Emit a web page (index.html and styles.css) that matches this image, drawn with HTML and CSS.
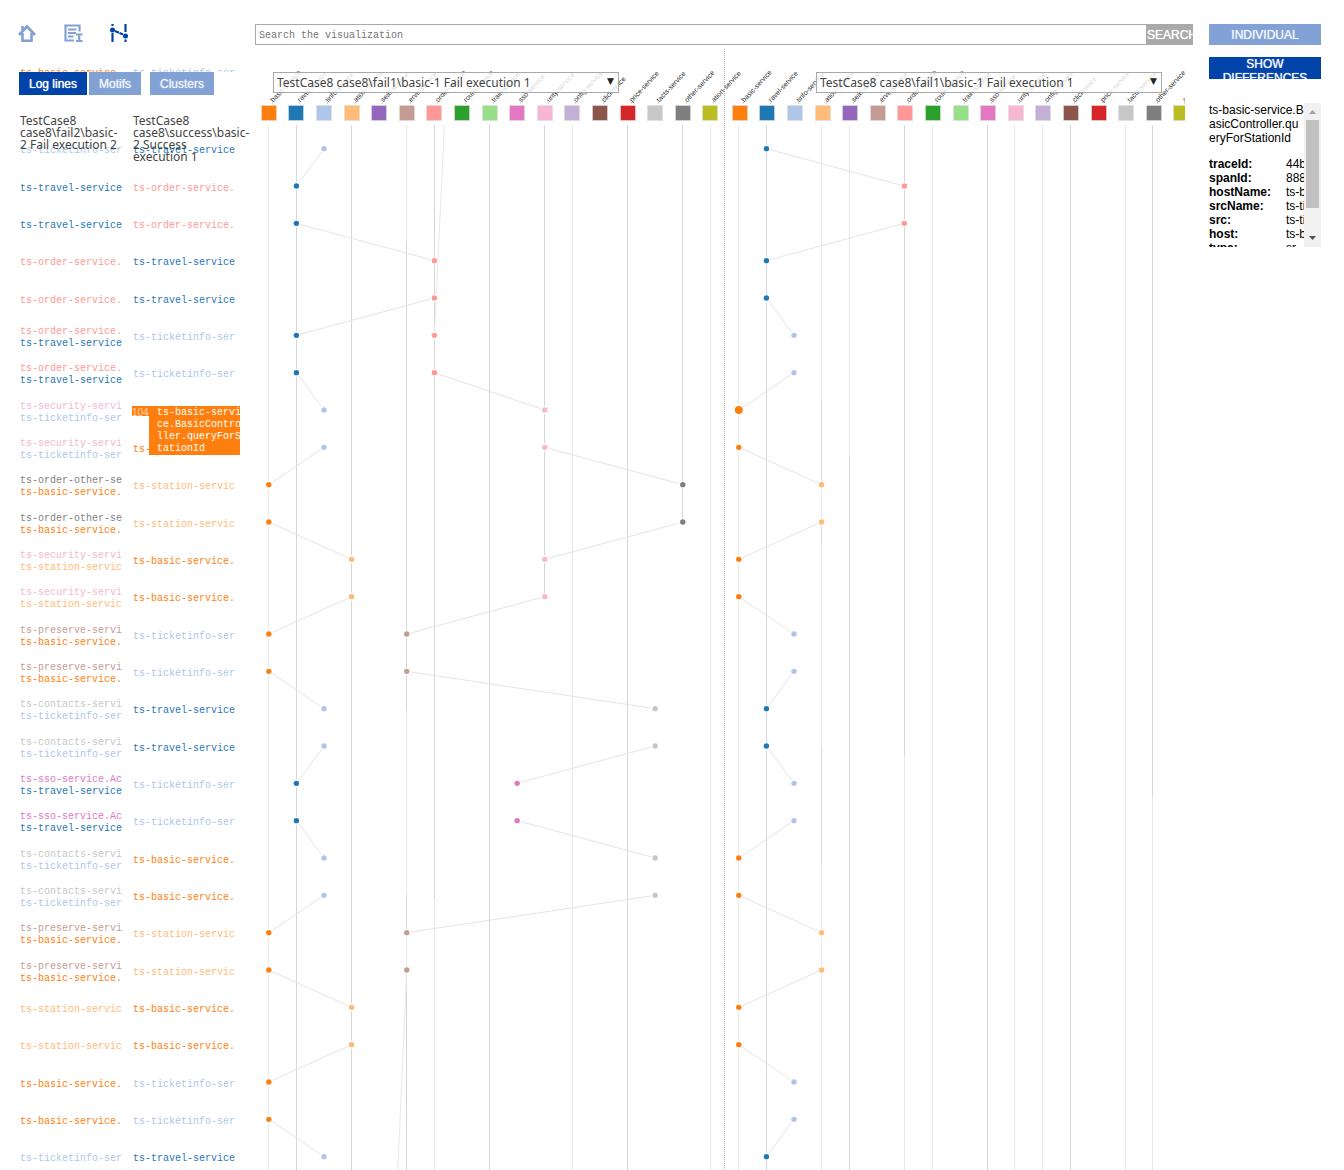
FILE: index.html
```html
<!DOCTYPE html>
<html lang="en">
<head>
<meta charset="utf-8">
<title>Trace log comparison</title>
<link rel="stylesheet" href="styles.css">
</head>
<body>
<div class="page">
  <aside class="side">
    <nav class="icons">
      <a href="#home" aria-label="Home">
        <svg width="20" height="20" viewBox="0 0 20 20"><path d="M1 11L9 2.500L17 11M4.500 9V16.800H13.500V9M4.500 8V2" fill="none" stroke="#82a2d6" stroke-width="2.600"/></svg>
      </a>
      <a href="#logs" aria-label="Logs">
        <svg width="20" height="20" viewBox="0 0 20 20"><path d="M15.500 7.500V1.500H1.500V16.500H10M4 5.500H12.500M4 9H12M4 12.500H9.500M12 10.500H18.500M12 17H18.500M15.200 10.500V17" fill="none" stroke="#82a2d6" stroke-width="2.200"/></svg>
      </a>
      <a href="#graph" aria-label="Graph">
        <svg width="20" height="20" viewBox="0 0 20 20"><path d="M2.500 0V2M2.500 9V18M15.500 0V8M15.500 15.500V18M5 7L9 8.800M9.500 9L13 10.500" fill="none" stroke="#04a" stroke-width="2.200"/><circle cx="2.500" cy="6" r="2.500" fill="#04a"/><circle cx="15.500" cy="12" r="2.500" fill="#04a"/></svg>
      </a>
    </nav>
    <div class="stack">
      <div class="logs" id="logs"></div>
      <div class="front">
        <div class="tabs">
          <button class="tab tab-on" type="button">Log lines</button>
          <button class="tab" type="button">Motifs</button>
          <button class="tab tab-apart" type="button">Clusters</button>
        </div>
        <div class="heads">
          <div>TestCase8 case8\fail2\basic-<wbr>2 Fail execution 2</div>
          <div>TestCase8 case8\success\basic-<wbr>2 Success execution 1</div>
        </div>
      </div>
    </div>
  </aside>

  <main class="main">
    <form class="search">
      <input class="search-box" type="text" aria-label="Search the visualization" placeholder="Search the visualization">
      <button class="search-go" type="button">SEARCH</button>
    </form>
    <div class="chart">
      <svg class="plot" id="plot" role="img" aria-label="Service calls over time"></svg>
      <div class="picks">
        <label class="pick"><select aria-label="Left execution"><option>TestCase8 case8\fail1\basic-1 Fail execution 1</option></select></label>
        <label class="pick"><select aria-label="Right execution"><option>TestCase8 case8\fail1\basic-1 Fail execution 1</option></select></label>
      </div>
    </div>
  </main>

  <aside class="info">
    <button class="wide" type="button">INDIVIDUAL</button>
    <button class="wide wide-on" type="button">SHOW DIFFERENCES</button>
    <div class="details">
      <div class="details-body">
        <p class="details-title">ts-basic-service.BasicController.queryForStationId</p>
        <table class="fields">
          <tr><th scope="row">traceId:</th><td>44b</td></tr>
          <tr><th scope="row">spanId:</th><td>888</td></tr>
          <tr><th scope="row">hostName:</th><td>ts-b</td></tr>
          <tr><th scope="row">srcName:</th><td>ts-ti</td></tr>
          <tr><th scope="row">src:</th><td>ts-ti</td></tr>
          <tr><th scope="row">host:</th><td>ts-b</td></tr>
          <tr><th scope="row">type:</th><td>sr</td></tr>
        </table>
      </div>
      <div class="bar">
        <svg width="17" height="17" viewBox="0 0 17 17"><path d="M5 11L8.500 7L12 11Z" fill="#a3a3a3"/></svg>
        <div class="thumb"></div>
        <svg class="bar-down" width="17" height="17" viewBox="0 0 17 17"><path d="M5 6L12 6L8.500 10Z" fill="#505050"/></svg>
      </div>
    </div>
  </aside>
</div>
<script src="script.js"></script>
</body>
</html>
```

FILE: styles.css
```css
* { box-sizing: border-box; }

body {
  margin: 0;
  background: #fff;
  color: #000;
  font: 12px/14px "Liberation Sans", Arial, sans-serif;
}

button {
  margin: 0;
  padding: 0;
  border: 0;
  border-radius: 0;
  background: #82a2d6;
  color: #f0f4fb;
  font: 12px/14px "Liberation Sans", Arial, sans-serif;
  text-shadow: 0 0 1px currentColor;
}

.page {
  display: grid;
  grid-template-columns: 221px minmax(0, 1fr) 112px;
  column-gap: 16px;
  height: 100vh;
  padding: 24px 23px 0 18px;
  overflow: hidden;
}

/* Left side: icons, tabs and the two log columns */
.side {
  display: flex;
  flex-direction: column;
  min-height: 0;
}
.icons {
  display: flex;
  flex: none;
  gap: 26px;
  height: 33px;
}
.icons a { height: 20px; }
.icons svg { display: block; }

.stack {
  display: grid;
  padding-left: 1px;
}
.stack > * { grid-area: 1 / 1; }

.logs {
  padding-left: 1px;
  font: 10px/12px "Liberation Mono", "Courier New", monospace;
}
.row {
  display: grid;
  grid-template-columns: 113px 113px;
  align-items: center;
  height: 37px;
}
.row:nth-child(3n) { height: 38px; }
.row:first-child {
  height: 38px;
  padding-bottom: 4px;
}
.cell {
  position: relative;
  white-space: nowrap;
}
.tip {
  position: absolute;
  z-index: 1;
  top: 0;
  left: -1px;
  display: flex;
  align-items: flex-start;
  width: 108px;
  margin-top: -1px;
  color: #fff;
}
.tip-no {
  width: 17px;
  height: 10px;
  background: #ff7f0e;
  color: #ffd3ab;
  font: 10px/14px "Liberation Sans", Arial, sans-serif;
  overflow: hidden;
}
.tip-text {
  width: 91px;
  padding: 1px 0 0 8px;
  background: #ff7f0e;
  overflow: hidden;
}
.tip-name {
  width: 86px;
  white-space: normal;
  word-break: break-all;
}

.front {
  position: relative;
  z-index: 1;
  margin-top: 15px;
  height: 60px;
}
.tabs {
  display: flex;
  gap: 2px;
  height: 23px;
  background: #fff;
}
.tab { width: 52px; }
.tab-on {
  width: 68px;
  background: #04a;
  color: #fff;
}
.tab-apart {
  width: 64px;
  margin-left: 7px;
}
.heads {
  display: grid;
  grid-template-columns: 113px 113px;
  height: 37px;
  padding: 20px 0 0 1px;
  background: #fff;
  color: #444;
  font: 12px/12px "Noto Sans", sans-serif;
}
.heads > div { padding-right: 10px; }

/* Centre: search and chart */
.main {
  display: flex;
  flex-direction: column;
  min-height: 0;
}
.search {
  display: flex;
  flex: none;
  height: 21px;
  margin-bottom: 4px;
}
.search-box {
  flex: 1;
  min-width: 0;
  padding: 2px 3px 0;
  border: 1px solid #a9a9a9;
  border-radius: 0;
  font: 10px/12px "Liberation Mono", "Courier New", monospace;
}
.search-box::placeholder { color: #757575; }
.search-go {
  width: 46px;
  background: #a9a9a9;
  color: #fff;
  text-align: left;
  overflow: hidden;
}

.chart {
  display: grid;
  flex: 1;
  min-height: 0;
}
.chart > * {
  grid-area: 1 / 1;
  min-height: 0;
}
.plot {
  width: calc(100% - 8px);
  height: 100%;
  overflow: hidden;
}
.plot text { font: 7px "Liberation Sans", Arial, sans-serif; fill: #333; }
.picks {
  display: flex;
  align-items: flex-start;
  justify-content: space-between;
  padding: 23px 31px 0 18px;
}
.pick {
  position: relative;
  width: 346px;
}
.pick select {
  display: block;
  width: 100%;
  height: 21px;
  padding: 0 3px;
  border: 1px solid #a9a9a9;
  border-radius: 0;
  appearance: none;
  background: rgba(255, 255, 255, 0.8);
  color: #444;
  font: 12px/18px "Noto Sans", sans-serif;
}
.pick::after {
  content: "▼";
  position: absolute;
  top: 2px;
  right: 5px;
  color: #222;
  font: 9px/14px "DejaVu Sans", sans-serif;
  pointer-events: none;
}

/* Right side: mode buttons and record details */
.info {
  display: flex;
  flex-direction: column;
}
.wide {
  flex: none;
  height: 21px;
  margin-bottom: 12px;
}
.wide-on {
  height: 22px;
  margin-bottom: 24px;
  background: #04a;
  overflow: hidden;
}
.details {
  display: flex;
  flex: none;
  height: 144px;
}
.details-body {
  width: 95px;
  overflow: hidden;
}
.details-title {
  margin: 0 0 12px;
  word-break: break-all;
}
.fields { border-collapse: collapse; }
.fields th {
  min-width: 77px;
  width: 77px;
  padding: 0;
  text-align: left;
}
.fields td {
  padding: 0;
  white-space: nowrap;
}
.bar {
  display: flex;
  flex-direction: column;
  width: 17px;
  background: #f1f1f1;
}
.thumb {
  height: 88px;
  margin: 0 2px;
  background: #c1c1c1;
}
.bar-down { margin-top: auto; }
```

FILE: script.js
```js
const lanes = [
  ["#ff7f0e", ".basic-service", "ts-basic-service."],
  ["#1f77b4", ".ravel-service", "ts-travel-service"],
  ["#aec7e8", ".tinfo-service", "ts-ticketinfo-ser"],
  ["#ffbb78", ".ation-service", "ts-station-servic"],
  ["#9467bd", ".seat-service", ""],
  ["#c49c94", ".erve-service", "ts-preserve-servi"],
  ["#ff9896", ".order-service", "ts-order-service."],
  ["#2ca02c", ".route-service", ""],
  ["#98df8a", ".train-service", ""],
  ["#e377c2", ".sso-service", "ts-sso-service.Ac"],
  ["#f7b6d2", ".urity-service", "ts-security-servi"],
  ["#c5b0d5", ".onfig-service", ""],
  ["#8c564b", ".click-twice", ""],
  ["#d62728", ".price-service", ""],
  ["#c7c7c7", ".tacts-service", "ts-contacts-servi"],
  ["#7f7f7f", ".other-service", "ts-order-other-se"],
  ["#bcbd22", ".ation-service", ""]
];

// Lane index of each event, one entry per row
const main = [2, 1, 1, 6, 6, 1, 1, 2, 2, 0, 0, 3, 3, 0, 0, 2, 2, 1, 1, 2, 2, 0, 0, 3, 3, 0, 0, 2];
const second = [, , , , , 6, 6, 10, 10, 15, 15, 10, 10, 5, 5, 14, 14, 9, 9, 14, 14, 5, 5];
const other = [1, 6, 6, 1, 1, 2, 2, 0, 0, 3, 3, 0, 0, 2, 2, 1, 1, 2, 2, 0, 0, 3, 3, 0, 0, 2, 2, 1];
const selectedRow = 7;

// Lane guides: lane, then [from, to, strong] spans in chart pixels
const END = 4000;
const leftGuides = {
  0: [[76, END, 0]], 1: [[76, END, 1]], 3: [[76, END, 1]],
  5: [[76, 194, 0], [194, 660, 1], [660, 846, 0], [846, 884, 1], [884, 921, 0], [921, END, 1]],
  6: [[76, 849, 1], [849, END, 0]], 8: [[76, END, 1]], 10: [[76, 548, 1]],
  11: [[76, END, 0]], 13: [[76, END, 1]], 15: [[76, 473, 1]], 16: [[76, END, 0]]
};
const rightGuides = {
  0: [[76, END, 0]], 1: [[76, END, 1]],
  3: [[76, 350, 0], [350, 436, 1], [436, 473, 0], [473, 494, 1], [494, 699, 0], [699, 816, 1], [816, END, 0]],
  4: [[76, 408, 0], [408, END, 1]], 6: [[76, 706, 1], [706, END, 0]],
  7: [[76, END, 0]], 9: [[76, END, 1]], 10: [[76, END, 0]], 11: [[76, END, 0]],
  12: [[76, END, 1]], 14: [[76, END, 0]], 15: [[76, 747, 1], [747, END, 0]]
};

const line = i => `<div style="color:${lanes[i][0]}">${lanes[i][2]}</div>`;
const row = (a, b, tip = "") =>
  `<div class="row"><div class="cell">${a}</div><div class="cell">${b}${tip}</div></div>`;

function drawLogs() {
  const tip = '<div class="tip"><div class="tip-no">104</div><div class="tip-text">' +
    '<div class="tip-name">ts-basic-service.BasicController.queryForStationId</div></div></div>';
  let html = row(line(0), line(2)) + row("", "");
  main.forEach((lane, k) => {
    const left = (second[k] === undefined ? "" : line(second[k])) + line(lane);
    html += k === selectedRow ? row(left, "&nbsp;", tip) : row(left, line(other[k]));
  });
  document.getElementById("logs").innerHTML = html;
}

function drawPlot() {
  const svg = document.getElementById("plot");
  const half = Math.round(svg.clientWidth / 2) + 5;
  const pitch = half / 17.03;
  const y = k => 99.67 + k * 37.333;
  let out = "";

  const seg = (x1, y1, x2, y2, c) =>
    `<line x1="${x1}" y1="${y1}" x2="${x2}" y2="${y2}" stroke="${c}"/>`;

  const panel = (start, shift, guides, series) => {
    const x = i => start + 13.8 + i * pitch;
    for (const i in guides) {
      const gx = Math.floor(x(+i) + 0.15 * shift) + 0.5;
      guides[i].forEach(([a, b, strong]) => { out += seg(gx, a, gx, b, strong ? "#d6d6d6" : "#e8e8e8"); });
    }
    series.forEach(s => {
      for (let k = 1; k < s.length; k++) {
        if (s[k - 1] !== undefined && s[k - 1] !== s[k]) {
          out += seg(x(s[k - 1]), y(k - 1), x(s[k]), y(k), "#e4e4e4");
        }
      }
    });
    if (series.length > 1) {
      out += seg(x(6) + 10, 76, x(6), y(5), "#e8e8e8");
      out += seg(x(5), y(22), x(5) - 9, y(22) + 200, "#e8e8e8");
    }
    series.forEach(s => s.forEach((lane, k) => {
      const r = s === other && k === selectedRow ? 4 : 2.7;
      out += `<circle cx="${x(lane)}" cy="${y(k)}" r="${r + 1.3}" fill="#fff"/>` +
        `<circle cx="${x(lane)}" cy="${y(k)}" r="${r}" fill="${lanes[lane][0]}"/>`;
    }));
    lanes.forEach(([color, name], i) => {
      const sx = Math.round(x(i) + shift);
      out += `<rect x="${sx - 7.5}" y="56.5" width="15" height="15" fill="${color}" stroke="#ddd" stroke-opacity="0.6"/>` +
        `<text transform="translate(${sx + 3} 55) rotate(-47)">${name}</text>`;
    });
  };

  panel(0, 0, leftGuides, [main, second]);
  out += `<line x1="${half - 0.5}" y1="0" x2="${half - 0.5}" y2="${END}" stroke="#aaa" stroke-dasharray="1 1"/>`;
  panel(half, 1, rightGuides, [other]);
  svg.innerHTML = out;
}

drawLogs();
drawPlot();
window.addEventListener("resize", drawPlot);
```
